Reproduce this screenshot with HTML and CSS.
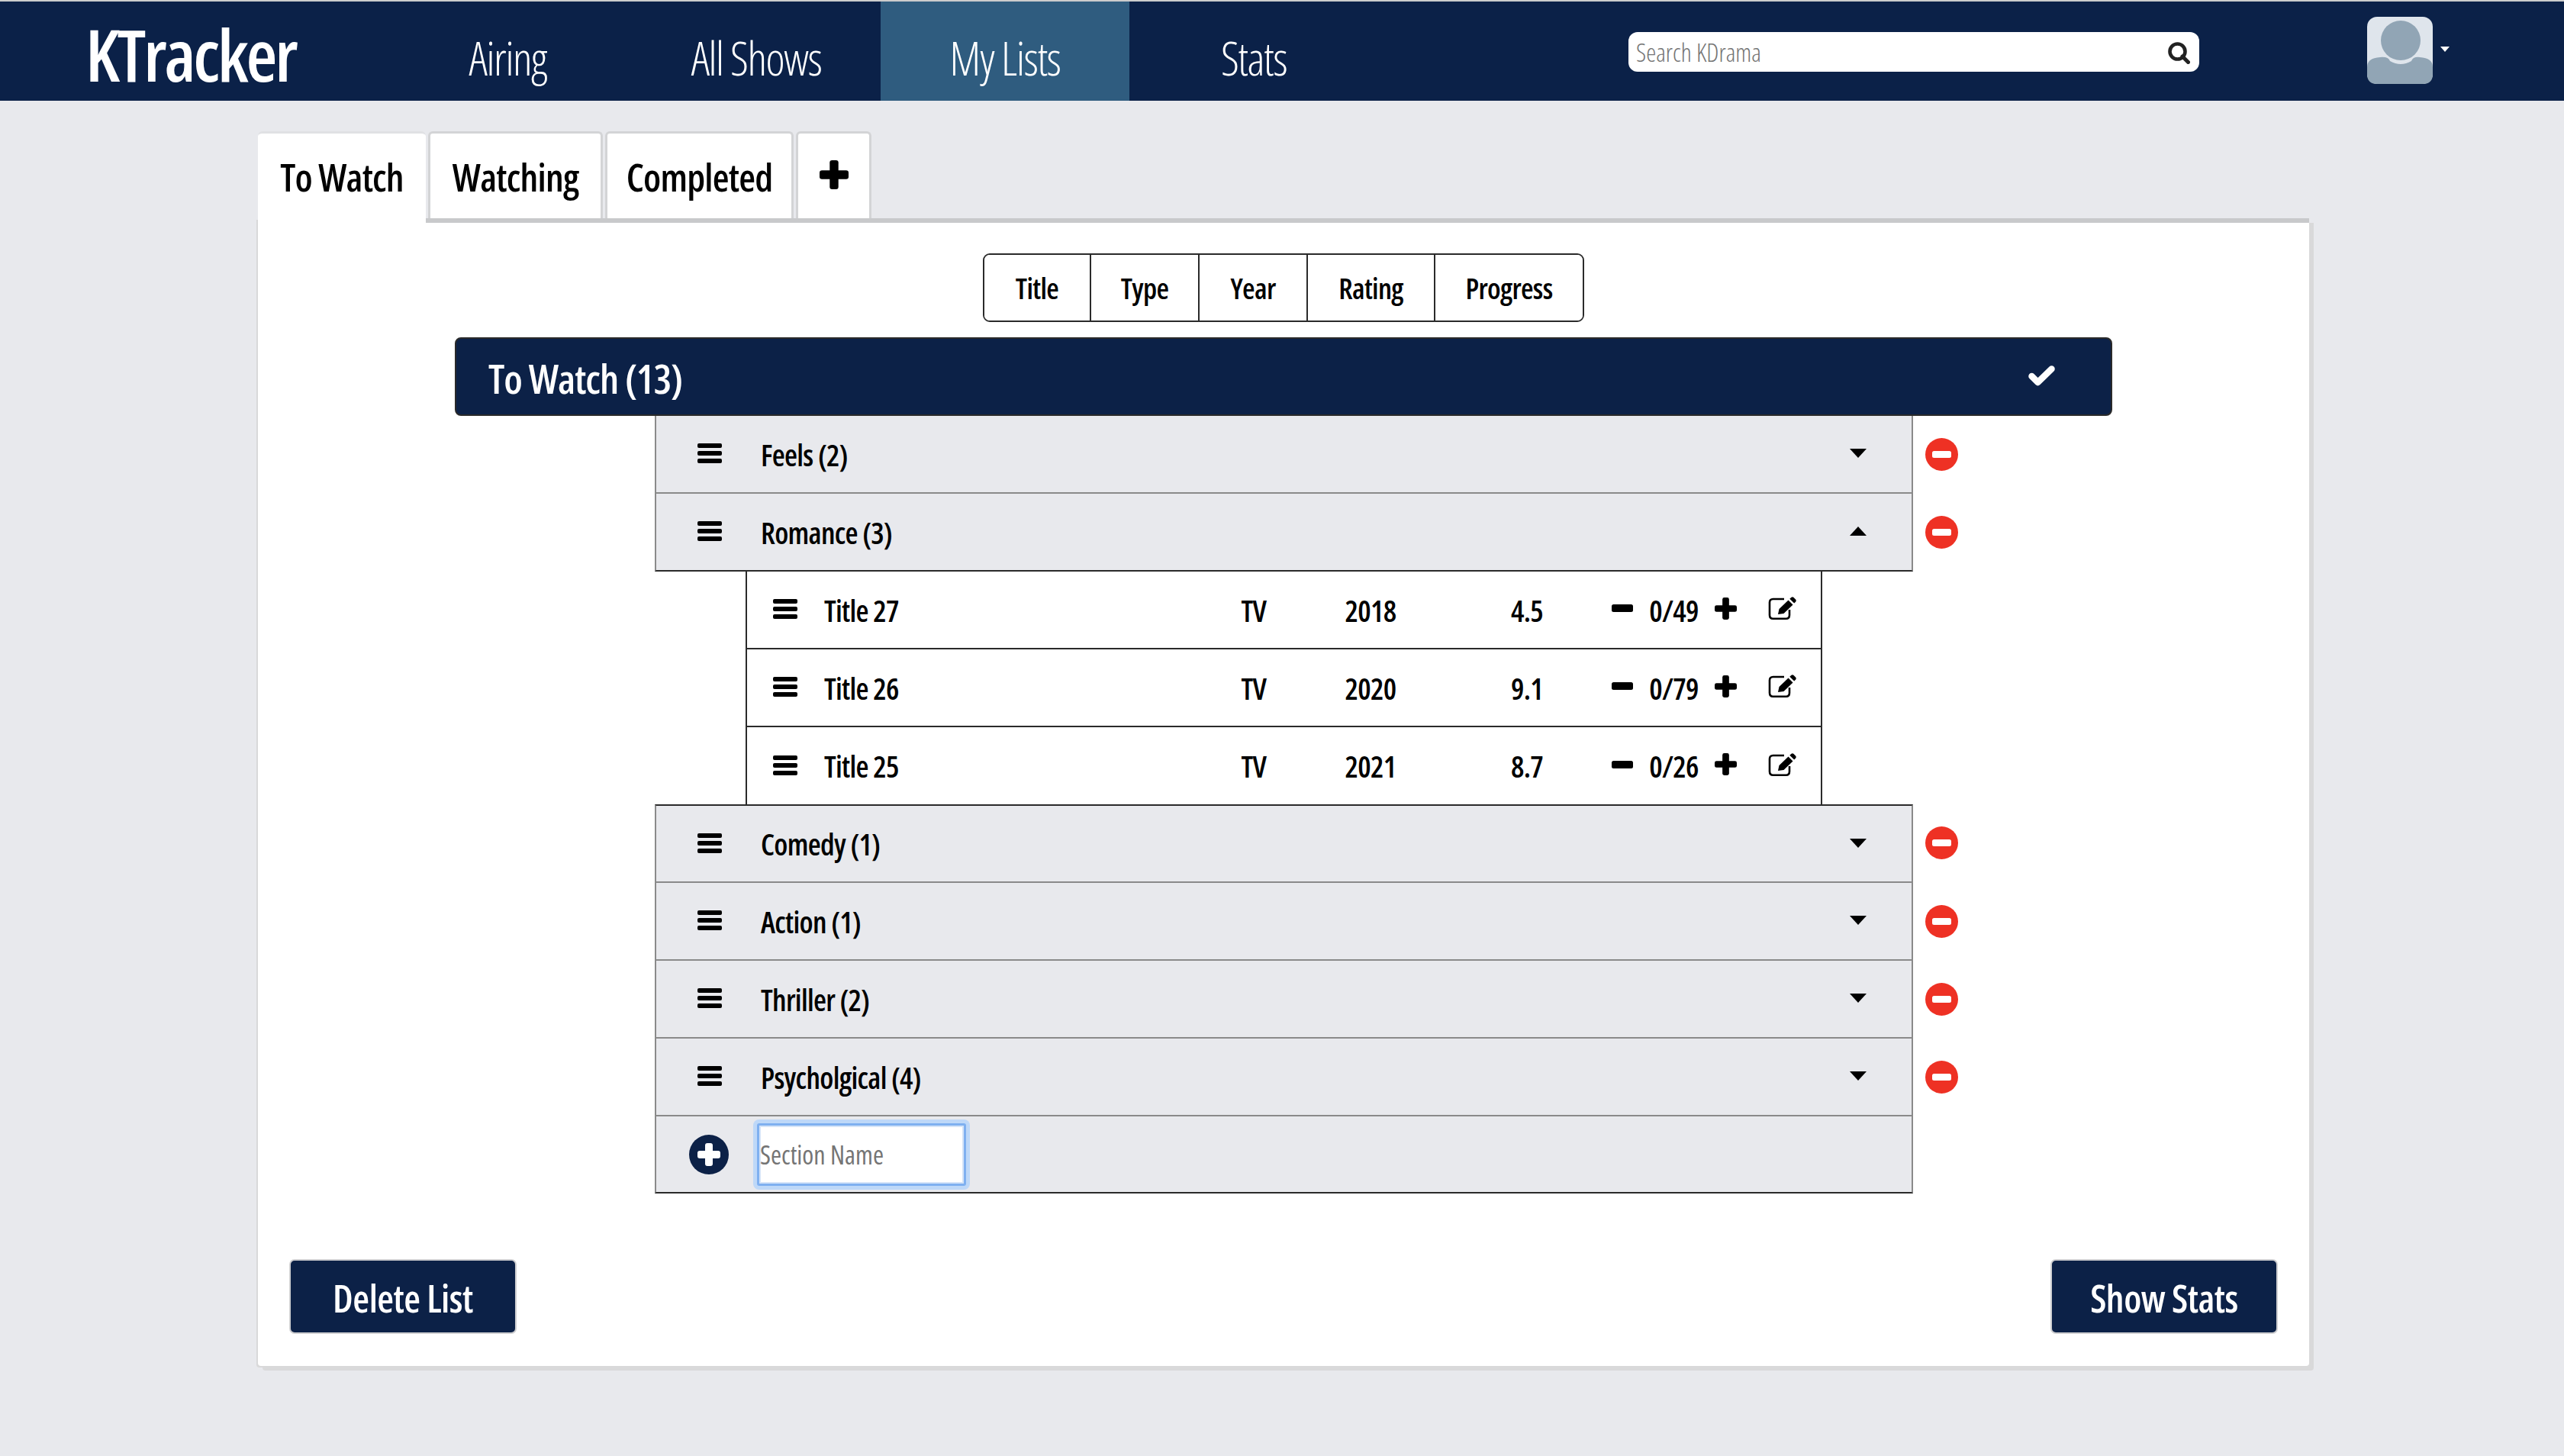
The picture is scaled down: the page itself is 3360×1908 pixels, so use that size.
FILE: index.html
```html
<!DOCTYPE html>
<html lang="en">
<head>
    <meta charset="UTF-8">
    <title>KTracker</title>
    <link rel="stylesheet" href="styles.css">
</head>
<body>
    <svg class="sprites" width="0" height="0">
        <symbol id="i-bars" viewBox="0 0 32 26"><rect width="32" height="6" rx="2"/><rect y="10" width="32" height="6" rx="2"/><rect y="20" width="32" height="6" rx="2"/></symbol>
        <symbol id="i-plus" viewBox="0 0 30 30"><rect x="10.500" width="9" height="30" rx="2.500"/><rect y="10.500" width="30" height="9" rx="2.500"/></symbol>
        <symbol id="i-minus" viewBox="0 0 28 10"><rect width="28" height="10" rx="2.500"/></symbol>
        <symbol id="i-edit" viewBox="0 0 37 30">
            <path d="M21 3H6.500Q2 3 2 7.500V24Q2 28.700 6.500 28.700H23.500Q28 28.700 28 24V17" fill="none" stroke="currentColor" stroke-width="2.600"/>
            <path d="M13 23L14.500 16L26.500 4.500L32.500 10.500L20.500 22Z"/>
            <path d="M28.300 2.700L30.500 .7Q32 -.2 33.300 .8L36.300 3.800Q37.200 5.200 36.200 6.500L34.200 8.500Z"/>
        </symbol>
        <symbol id="i-remove" viewBox="0 0 43 43"><circle cx="21.500" cy="21.500" r="21.500" fill="#ee3124"/><rect x="9" y="17" width="25" height="9" rx="2.500" fill="#fff"/></symbol>
    </svg>

    <!-- Top bar -->
    <nav class="topbar">
        <a class="logo">KTracker</a>
        <a class="nav-link">Airing</a>
        <a class="nav-link">All Shows</a>
        <a class="nav-link active">My Lists</a>
        <a class="nav-link">Stats</a>
        <div class="search">
            <input type="text" placeholder="Search KDrama">
            <svg class="search-icon" viewBox="0 0 29 29"><circle cx="12.500" cy="12.500" r="10" fill="none" stroke="currentColor" stroke-width="4.600"/><path d="M19 19L26.500 26.500" stroke="currentColor" stroke-width="5" stroke-linecap="round"/></svg>
        </div>
        <svg class="avatar" viewBox="0 0 86 88">
            <rect width="86" height="88" rx="13" fill="#dfe5ec"/>
            <circle cx="44" cy="31" r="26" fill="#91a5b5"/>
            <path d="M0 66Q0 54 17 53Q28 52 30 58Q44 66 58 58Q60 52 69 53Q86 54 86 66V75Q86 88 73 88H13Q0 88 0 75Z" fill="#91a5b5"/>
        </svg>
        <span class="avatar-caret"></span>
    </nav>

    <main class="page">
        <!-- List tabs -->
        <div class="tabs">
            <a class="tab tab-active">To Watch</a>
            <a class="tab tab-watching">Watching</a>
            <a class="tab tab-completed">Completed</a>
            <a class="tab tab-add"><svg class="tab-plus"><use href="#i-plus"/></svg></a>
        </div>

        <section class="card">
            <div class="sort-bar">
                <button class="sort-btn sort-title">Title</button>
                <button class="sort-btn sort-type">Type</button>
                <button class="sort-btn sort-year">Year</button>
                <button class="sort-btn sort-rating">Rating</button>
                <button class="sort-btn sort-progress">Progress</button>
            </div>

            <div class="list-head">
                <h2>To Watch (13)</h2>
                <svg class="check" viewBox="0 0 35 27"><path d="M4.500 14L12.500 22L30.500 4.500" fill="none" stroke="#fff" stroke-width="8.500" stroke-linejoin="round" stroke-linecap="round"/></svg>
            </div>

            <div class="sections">
                <div class="section-line">
                    <div class="section">
                        <svg class="bars"><use href="#i-bars"/></svg>
                        <span class="section-name">Feels (2)</span>
                        <span class="caret"></span>
                    </div>
                    <svg class="remove"><use href="#i-remove"/></svg>
                </div>
                <div class="section-line">
                    <div class="section section-open">
                        <svg class="bars"><use href="#i-bars"/></svg>
                        <span class="section-name">Romance (3)</span>
                        <span class="caret caret-up"></span>
                    </div>
                    <svg class="remove"><use href="#i-remove"/></svg>
                </div>

                <div class="shows">
                    <div class="show">
                        <svg class="bars"><use href="#i-bars"/></svg>
                        <span class="show-title">Title 27</span>
                        <span class="show-type">TV</span>
                        <span class="show-year">2018</span>
                        <span class="show-rating">4.5</span>
                        <svg class="step-minus"><use href="#i-minus"/></svg>
                        <span class="show-progress">0/49</span>
                        <svg class="step-plus"><use href="#i-plus"/></svg>
                        <svg class="edit"><use href="#i-edit"/></svg>
                    </div>
                    <div class="show">
                        <svg class="bars"><use href="#i-bars"/></svg>
                        <span class="show-title">Title 26</span>
                        <span class="show-type">TV</span>
                        <span class="show-year">2020</span>
                        <span class="show-rating">9.1</span>
                        <svg class="step-minus"><use href="#i-minus"/></svg>
                        <span class="show-progress">0/79</span>
                        <svg class="step-plus"><use href="#i-plus"/></svg>
                        <svg class="edit"><use href="#i-edit"/></svg>
                    </div>
                    <div class="show">
                        <svg class="bars"><use href="#i-bars"/></svg>
                        <span class="show-title">Title 25</span>
                        <span class="show-type">TV</span>
                        <span class="show-year">2021</span>
                        <span class="show-rating">8.7</span>
                        <svg class="step-minus"><use href="#i-minus"/></svg>
                        <span class="show-progress">0/26</span>
                        <svg class="step-plus"><use href="#i-plus"/></svg>
                        <svg class="edit"><use href="#i-edit"/></svg>
                    </div>
                </div>

                <div class="section-line">
                    <div class="section">
                        <svg class="bars"><use href="#i-bars"/></svg>
                        <span class="section-name">Comedy (1)</span>
                        <span class="caret"></span>
                    </div>
                    <svg class="remove"><use href="#i-remove"/></svg>
                </div>
                <div class="section-line">
                    <div class="section">
                        <svg class="bars"><use href="#i-bars"/></svg>
                        <span class="section-name">Action (1)</span>
                        <span class="caret"></span>
                    </div>
                    <svg class="remove"><use href="#i-remove"/></svg>
                </div>
                <div class="section-line">
                    <div class="section">
                        <svg class="bars"><use href="#i-bars"/></svg>
                        <span class="section-name">Thriller (2)</span>
                        <span class="caret"></span>
                    </div>
                    <svg class="remove"><use href="#i-remove"/></svg>
                </div>
                <div class="section-line">
                    <div class="section">
                        <svg class="bars"><use href="#i-bars"/></svg>
                        <span class="section-name">Psycholgical (4)</span>
                        <span class="caret"></span>
                    </div>
                    <svg class="remove"><use href="#i-remove"/></svg>
                </div>

                <!-- New section -->
                <div class="section section-add">
                    <svg class="add-circle" viewBox="0 0 52 52"><circle cx="26" cy="26" r="26" fill="#0c2147"/><rect x="11" y="21" width="30" height="10" rx="3" fill="#fff"/><rect x="21" y="11" width="10" height="30" rx="3" fill="#fff"/></svg>
                    <input class="section-input" type="text" placeholder="Section Name">
                </div>
            </div>

            <div class="card-foot">
                <button class="foot-btn">Delete List</button>
                <button class="foot-btn">Show Stats</button>
            </div>
        </section>
    </main>
</body>
</html>
```
FILE: styles.css
```css
body {
    margin: 0;
    min-height: 1908px;
    background-color: #e8e9ed;
    font-family: "Open Sans", "Liberation Sans", sans-serif;
    font-stretch: 75%;
    color: #000;
}
svg {
    fill: currentColor;
    display: block;
    flex: none;
}
.sprites {
    position: absolute;
}

/* Top bar */
.topbar {
    display: flex;
    align-items: stretch;
    height: 130px;
    border-top: 2px solid #cccccc;
    background-color: #0b2148;
    color: #fff;
}
.logo {
    width: 390px;
    padding-left: 112px;
    font-size: 94px;
    font-weight: 600;
    line-height: 138px;
    letter-spacing: -3.200px;
}
.nav-link {
    width: 326px;
    text-align: center;
    font-size: 60px;
    font-weight: 300;
    line-height: 148px;
    letter-spacing: -1.500px;
}
.active {
    background-color: #2f5c7f;
}
.search {
    position: relative;
    width: 748px;
    height: 52px;
    margin: 40px 0 0 328px;
}
.search input {
    width: 100%;
    height: 100%;
    box-sizing: border-box;
    padding: 0 60px 0 10px;
    border: none;
    border-radius: 12px;
    font: 300 33px "Open Sans", sans-serif;
    font-stretch: 75%;
}
.search-icon {
    position: absolute;
    top: 13px;
    right: 12px;
    width: 29px;
    height: 29px;
    color: #222;
}
.avatar {
    width: 86px;
    height: 88px;
    margin: 20px 0 0 220px;
}
.avatar-caret {
    width: 0;
    height: 0;
    margin: 59px 0 0 10px;
    border-top: 7px solid #fff;
    border-left: 6px solid transparent;
    border-right: 6px solid transparent;
}

/* Tabs */
.page {
    width: 2688px;
    margin: 40px 0 0 338px;
}
.tabs {
    display: flex;
    gap: 3px;
    align-items: flex-start;
}
.tab {
    box-sizing: border-box;
    height: 114px;
    padding-top: 8px;
    text-align: center;
    font-size: 50px;
    font-weight: 600;
    line-height: 98px;
    background-color: #fff;
    border: 3px solid #d3d4d6;
    border-bottom: none;
    border-radius: 6px 6px 0 0;
    letter-spacing: -.800px;
}
.tab-active {
    width: 220px;
    height: 120px;
    border-color: #e0e1e4;
    position: relative;
    border-left: none;
    border-right: none;
}
.tab-watching {
    width: 229px;
}
.tab-completed {
    width: 247px;
}
.tab-add {
    width: 99px;
    padding: 35px 0 0 28px;
}
.tab-plus {
    width: 38px;
    height: 38px;
}

/* Card */
.card {
    margin-top: -6px;
    padding-top: 40px;
    background-color: #fff;
    border-top: 6px solid #c8c9cb;
    box-shadow: 6px 6px 0 #d9d9da, -2px 2px 0 #d9d9da;
    border-radius: 0 0 4px 4px;
}
.sort-bar {
    display: flex;
    width: 788px;
    height: 90px;
    box-sizing: border-box;
    margin: 0 auto;
    border: 2px solid #2a2a2a;
    border-radius: 9px;
    overflow: hidden;
}
.sort-btn {
    padding: 0;
    border: none;
    border-right: 2px solid #2a2a2a;
    background: #fff;
    font: 600 38px "Open Sans", sans-serif;
    font-stretch: 75%;
    letter-spacing: -.700px;
}
.sort-title { width: 140px; }
.sort-type { width: 142px; }
.sort-year { width: 142px; }
.sort-rating { width: 167px; }
.sort-progress { flex: 1; border-right: none; }

.list-head {
    display: flex;
    align-items: center;
    justify-content: space-between;
    box-sizing: border-box;
    width: 2172px;
    height: 103px;
    margin: 20px auto 0;
    padding: 4px 73px 0 42px;
    background-color: #0c2147;
    border: 2px solid #2a2a2a;
    border-radius: 8px;
    color: #fff;
}
.list-head h2 {
    margin: 0;
    font-size: 53px;
    font-weight: 600;
    letter-spacing: -1px;
}
.check {
    width: 35px;
    height: 27px;
    margin-bottom: 6px;
}

/* Sections */
.sections {
    width: 1710px;
    margin-left: 520px;
}
.section-line {
    display: flex;
    align-items: center;
    gap: 16px;
}
.section {
    display: flex;
    align-items: center;
    box-sizing: border-box;
    width: 1649px;
    height: 102px;
    padding: 0 59px 0 54px;
    background-color: #e8e9ed;
    border: solid #8a8a8a;
    border-width: 0 2px 2px 2px;
}
.section-open {
    border-bottom-color: #2a2a2a;
}
.shows + .section-line .section {
    height: 103px;
    border-top: 2px solid #2a2a2a;
}
.section-name {
    flex: 1;
    margin-left: 51px;
    font-size: 39px;
    font-weight: 600;
    letter-spacing: -.700px;
}
.bars {
    width: 32px;
    height: 26px;
    margin-bottom: 2px;
}
.caret {
    border-top: 12px solid #000;
    border-left: 11px solid transparent;
    border-right: 11px solid transparent;
    margin-bottom: 2px;
}
.caret-up {
    border-top: none;
    border-bottom: 12px solid #000;
}
.remove {
    width: 43px;
    height: 43px;
    margin-bottom: 2px;
}

/* Shows in an open section */
.shows {
    width: 1411px;
    margin-left: 119px;
}
.show {
    display: flex;
    align-items: center;
    box-sizing: border-box;
    height: 102px;
    padding-left: 34px;
    background-color: #fff;
    border: solid #2a2a2a;
    border-width: 0 2px 2px 2px;
    font-size: 39px;
    font-weight: 600;
    letter-spacing: -.700px;
}
.show:last-child {
    height: 101px;
    border-bottom: none;
}
.show-title {
    width: 513px;
    margin-left: 35px;
}
.show-type,
.show-year,
.show-rating {
    width: 100px;
    text-align: center;
}
.show-year { margin-left: 53px; }
.show-rating { margin-left: 105px; }
.step-minus {
    width: 28px;
    height: 10px;
    margin: 0 0 4px 61px;
}
.show-progress {
    width: 107px;
    text-align: center;
}
.step-plus {
    width: 29px;
    height: 29px;
    margin-bottom: 4px;
}
.edit {
    width: 37px;
    height: 30px;
    margin: 0 0 4px 41px;
}

/* New section row */
.section-add {
    height: 101px;
    padding: 0 0 0 43px;
    border-bottom-color: #2a2a2a;
}
.add-circle {
    width: 52px;
    height: 52px;
}
.section-input {
    box-sizing: border-box;
    width: 274px;
    height: 82px;
    margin-left: 37px;
    padding: 0 0 0 1px;
    border: 3px solid #7fb0f0;
    border-radius: 3px;
    box-shadow: 0 0 0 5px #bed8f8, inset 0 0 0 2px #d5e4f8;
    outline: none;
    font: 500 34px "Open Sans", sans-serif;
    font-stretch: 75%;
}

/* Bottom buttons */
.card-foot {
    display: flex;
    justify-content: space-between;
    margin-top: 86px;
    padding: 0 41px 42px;
}
.foot-btn {
    width: 298px;
    height: 98px;
    padding-top: 4px;
    border: 2px solid #cfcfd1;
    border-radius: 7px;
    background-color: #0c2147;
    color: #fff;
    font: 600 50px "Open Sans", sans-serif;
    font-stretch: 75%;
    letter-spacing: -.500px;
}
```
